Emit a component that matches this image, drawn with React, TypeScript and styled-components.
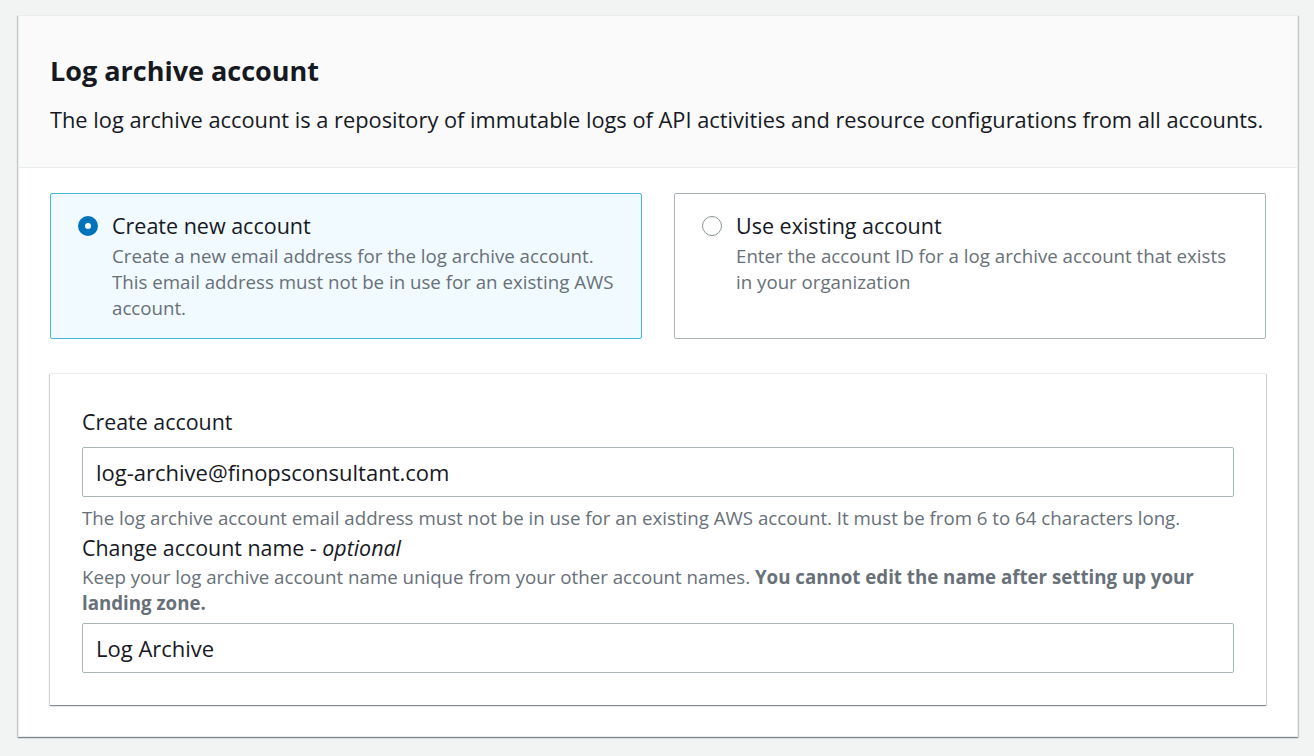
import React from "react";
import styled, { createGlobalStyle } from "styled-components";

const Global = createGlobalStyle`
  html, body { margin: 0; padding: 0; background: #f2f3f3; }
  body { font-family: "Open Sans", "Noto Sans", sans-serif; color: #16191f; }
  * { box-sizing: border-box; }
`;

const Page = styled.div`
  padding: 15px 16px 19px 18px;
  min-height: 756px;
`;

const Panel = styled.section`
  background: #fff;
  border: 1px solid #eaeded;
  box-shadow: 0 1px 1px 0 rgba(0, 28, 36, 0.3), 1px 1px 1px 0 rgba(0, 28, 36, 0.15), -1px 1px 1px 0 rgba(0, 28, 36, 0.15);
`;

const Header = styled.header`
  background: #fafafa;
  border-bottom: 1px solid #eaeded;
  padding: 38px 32px 32px 31px;
`;

const Title = styled.h2`
  margin: 0;
  font-size: 27px;
  line-height: 34px;
  font-weight: 700;
`;

const Desc = styled.p`
  margin: 17px 0 0;
  font-size: 21.8px;
  line-height: 30px;
`;

const Body = styled.div`
  padding: 25px 31px 31px 31px;
  display: flex;
  flex-direction: column;
  gap: 34px;
`;

const Tiles = styled.div`
  display: grid;
  grid-template-columns: 1fr 1fr;
  gap: 32px;
`;

const Tile = styled.label<{ $selected?: boolean }>`
  display: flex;
  gap: 14px;
  padding: 17px 26px 17px 27px;
  min-height: 146px;
  border: 1px solid ${(p) => (p.$selected ? "#44b9d6" : "#aab7b8")};
  background: ${(p) => (p.$selected ? "#f1faff" : "#fff")};
  border-radius: 2px;
`;

const Radio = styled.span<{ $checked?: boolean }>`
  flex: none;
  width: 20px;
  height: 20px;
  margin-top: 5px;
  border-radius: 50%;
  border: ${(p) => (p.$checked ? "7px solid #0073bb" : "1.5px solid #879596")};
  background: #fff;
`;

const TileText = styled.div`
  display: flex;
  flex-direction: column;
  gap: 2px;
`;

const TileTitle = styled.span`
  font-size: 21.5px;
  line-height: 30px;
`;

const TileDesc = styled.span`
  font-size: 18.7px;
  line-height: 26px;
  color: #687078;
`;

const SubPanel = styled.div`
  background: #fff;
  padding: 33px 32px 32px 32px;
  box-shadow: 0 1px 1px 0 rgba(0, 28, 36, 0.3), 1px 1px 1px 0 rgba(0, 28, 36, 0.15), -1px 1px 1px 0 rgba(0, 28, 36, 0.15);
  border-top: 1px solid #eaeded;
`;

const Label = styled.div<{ $gap?: number }>`
  margin-top: ${(p) => p.$gap ?? 0}px;
  font-size: 21.4px;
  line-height: 30px;
`;

const Input = styled.div<{ $gap?: number }>`
  margin-top: ${(p) => p.$gap ?? 10}px;
  height: 50px;
  border: 1px solid #aab7b8;
  border-radius: 2px;
  padding: 0 13px;
  display: flex;
  align-items: center;
  font-size: 22px;
`;

const Hint = styled.div<{ $gap?: number }>`
  margin-top: ${(p) => p.$gap ?? 0}px;
  font-size: 18.7px;
  line-height: 26px;
  color: #687078;
`;

const Strong = styled.b`
  font-weight: 700;
`;

export default function App() {
  return (
    <>
      <Global />
      <Page>
        <Panel>
          <Header>
            <Title>Log archive account</Title>
            <Desc>
              The log archive account is a repository of immutable logs of API activities and resource configurations from all accounts.
            </Desc>
          </Header>
          <Body>
            <Tiles>
              <Tile $selected>
                <Radio $checked />
                <TileText>
                  <TileTitle>Create new account</TileTitle>
                  <TileDesc>
                    Create a new email address for the log archive account. This email address must not be in use for an existing AWS account.
                  </TileDesc>
                </TileText>
              </Tile>
              <Tile>
                <Radio />
                <TileText>
                  <TileTitle>Use existing account</TileTitle>
                  <TileDesc>Enter the account ID for a log archive account that exists in your organization</TileDesc>
                </TileText>
              </Tile>
            </Tiles>
            <SubPanel>
              <Label>Create account</Label>
              <Input>log-archive@finopsconsultant.com</Input>
              <Hint $gap={8}>
                The log archive account email address must not be in use for an existing AWS account. It must be from 6 to 64 characters long.
              </Hint>
              <Label $gap={2}>
                Change account name - <i>optional</i>
              </Label>
              <Hint $gap={1}>
                Keep your log archive account name unique from your other account names.{" "}
                <Strong>You cannot edit the name after setting up your landing zone.</Strong>
              </Hint>
              <Input $gap={7}>Log Archive</Input>
            </SubPanel>
          </Body>
        </Panel>
      </Page>
    </>
  );
}
